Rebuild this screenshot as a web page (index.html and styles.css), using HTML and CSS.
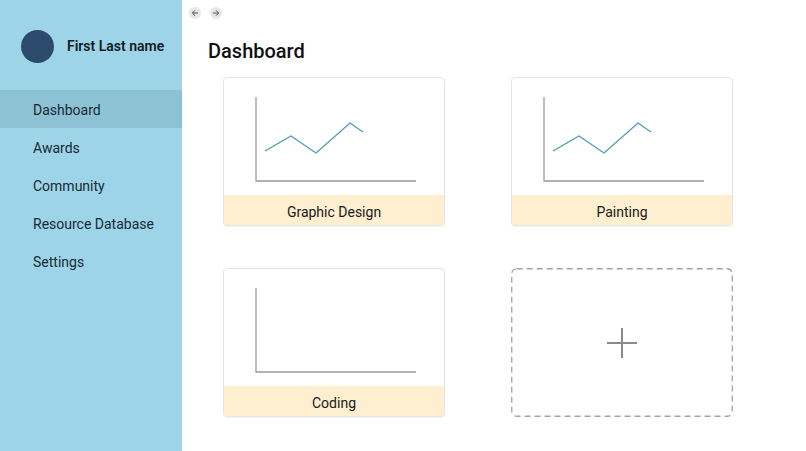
FILE: index.html
```html
<!DOCTYPE html>
<html>
<head>
<meta charset="utf-8">
<link rel="stylesheet" href="styles.css">
</head>
<body>
<div class="app">
  <aside class="sidebar">
    <div class="profile">
      <div class="avatar"></div>
      <div class="name">First Last name</div>
    </div>
    <nav class="menu">
      <div class="item active">Dashboard</div>
      <div class="item">Awards</div>
      <div class="item">Community</div>
      <div class="item">Resource Database</div>
      <div class="item">Settings</div>
    </nav>
  </aside>
  <main class="main">
    <div class="navbtns">
      <span class="navbtn"><svg width="8" height="8" viewBox="0 0 8 8"><path d="M7 4H1.5M4 1.3L1.3 4 4 6.7" fill="none" stroke="#555" stroke-width="1"/></svg></span>
      <span class="navbtn"><svg width="8" height="8" viewBox="0 0 8 8"><path d="M1 4h5.5M4 1.3L6.7 4 4 6.7" fill="none" stroke="#555" stroke-width="1"/></svg></span>
    </div>
    <h1 class="title">Dashboard</h1>
    <div class="grid">
      <div class="card">
        <div class="chart">
          <svg width="220" height="117" viewBox="0 0 220 117">
            <path d="M32 19V103H192" fill="none" stroke="#9a9a9a" stroke-width="1.3"/>
            <path d="M41 73L67 58L92 75L126 45L139 54" fill="none" stroke="#4c9cb3" stroke-width="1.3"/>
          </svg>
        </div>
        <div class="label">Graphic Design</div>
      </div>
      <div class="card">
        <div class="chart">
          <svg width="220" height="117" viewBox="0 0 220 117">
            <path d="M32 19V103H192" fill="none" stroke="#9a9a9a" stroke-width="1.3"/>
            <path d="M41 73L67 58L92 75L126 45L139 54" fill="none" stroke="#4c9cb3" stroke-width="1.3"/>
          </svg>
        </div>
        <div class="label">Painting</div>
      </div>
      <div class="card">
        <div class="chart">
          <svg width="220" height="117" viewBox="0 0 220 117">
            <path d="M32 19V103H192" fill="none" stroke="#9a9a9a" stroke-width="1.3"/>
          </svg>
        </div>
        <div class="label">Coding</div>
      </div>
      <div class="add">
        <svg class="dash" width="222" height="149" viewBox="0 0 222 149">
          <rect x="0.75" y="0.75" width="220.5" height="147.5" rx="5" fill="none" stroke="#a3a3a3" stroke-width="1.3" stroke-dasharray="6 4"/>
        </svg>
        <svg width="32" height="32" viewBox="0 0 32 32">
          <path d="M16 1V31M1 16H31" fill="none" stroke="#8a8a8a" stroke-width="2"/>
        </svg>
      </div>
    </div>
  </main>
</div>
</body>
</html>
```
FILE: styles.css
```css
html, body {
  margin: 0;
  padding: 0;
  background: #ffffff;
  font-family: Roboto, "Liberation Sans", sans-serif;
}
.app {
  display: flex;
  width: 806px;
  height: 451px;
  overflow: hidden;
}
.sidebar {
  width: 182px;
  flex: none;
  background: #9ed4e7;
  color: #13242d;
}
.profile {
  display: flex;
  align-items: center;
  padding: 30px 0 0 21px;
}
.avatar {
  width: 33px;
  height: 33px;
  border-radius: 50%;
  background: #2c4a6b;
  flex: none;
}
.name {
  margin-left: 13px;
  font-size: 14px;
  font-weight: 600;
  color: #0f1a22;
  margin-top: -1px;
}
.menu {
  margin-top: 27px;
}
.item {
  height: 38px;
  line-height: 40px;
  padding-left: 33px;
  font-size: 14px;
  color: #152a34;
}
.item.active {
  background: #8cc2d4;
}
.main {
  flex: 1;
  padding-left: 26px;
}
.navbtns {
  display: flex;
  gap: 9px;
  margin: 7px 0 0 -19px;
}
.navbtn {
  width: 12px;
  height: 12px;
  border-radius: 50%;
  background: #e6e6e6;
  display: flex;
  align-items: center;
  justify-content: center;
}
.title {
  margin: 19px 0 0 0;
  font-size: 20px;
  font-weight: 500;
  color: #111;
  line-height: 26px;
}
.grid {
  display: grid;
  grid-template-columns: 222px 222px;
  column-gap: 66px;
  row-gap: 42px;
  margin: 13px 0 0 15px;
}
.card {
  height: 149px;
  box-sizing: border-box;
  border: 1px solid #e4e4e4;
  border-radius: 4px;
  background: #fff;
  display: flex;
  flex-direction: column;
  overflow: hidden;
  box-shadow: 0 1px 1px rgba(0,0,0,0.04);
}
.chart {
  height: 117px;
}
.chart svg {
  display: block;
}
.label {
  flex: 1;
  background: #fdefcf;
  display: flex;
  align-items: center;
  justify-content: center;
  padding-top: 3px;
  font-size: 14px;
  color: #1a1a1a;
}
.add {
  position: relative;
  height: 149px;
  display: flex;
  align-items: center;
  justify-content: center;
}
.add .dash {
  position: absolute;
  left: 0;
  top: 0;
}
```
